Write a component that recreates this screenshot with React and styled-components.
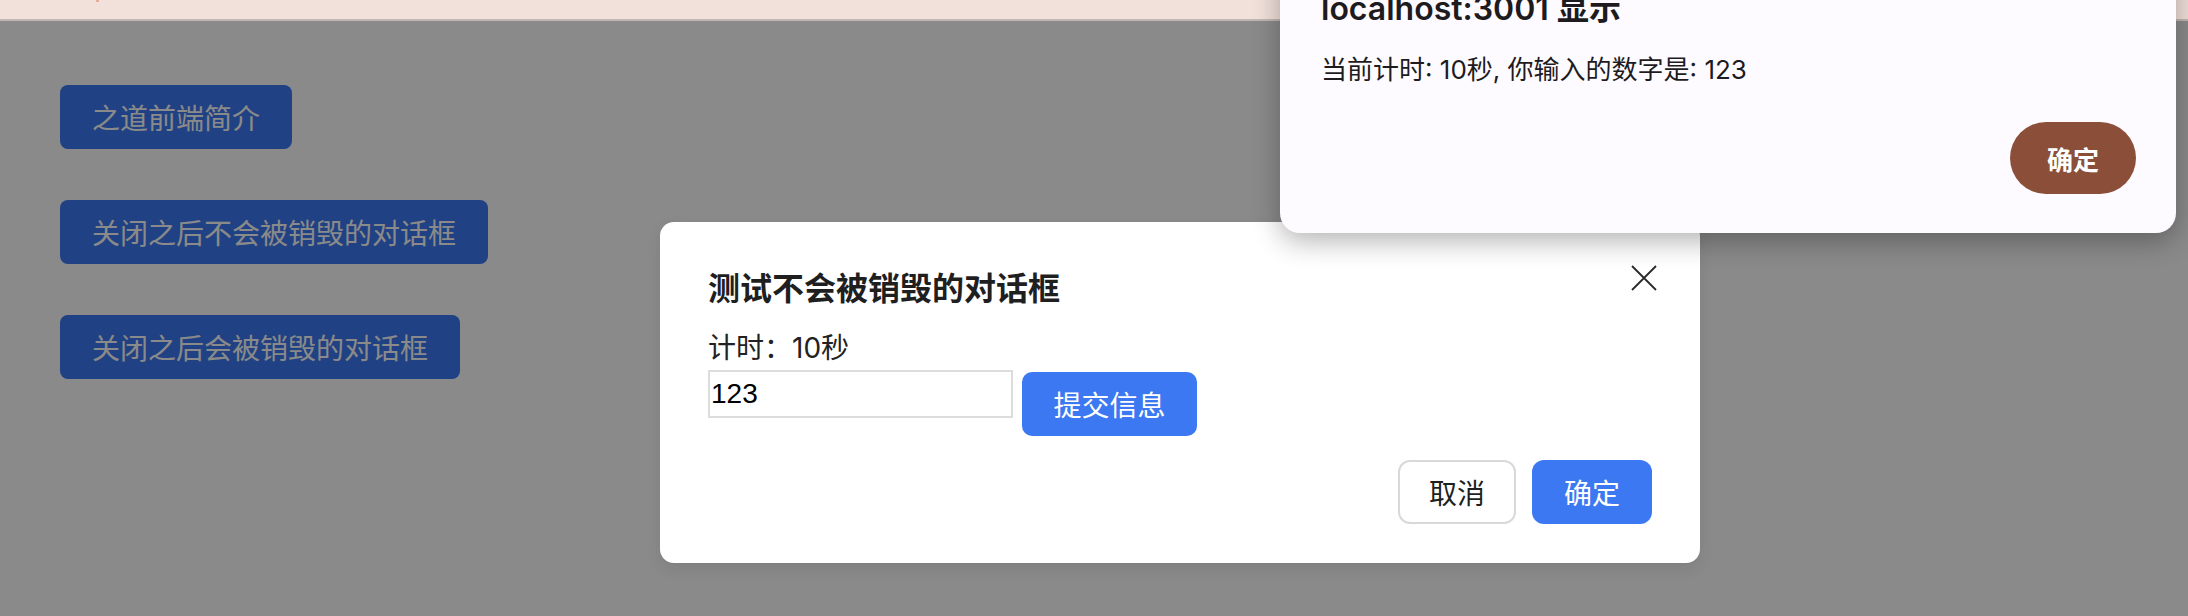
import React from "react";
import styled, { createGlobalStyle } from "styled-components";

const GlobalStyle = createGlobalStyle`
  html, body { margin: 0; padding: 0; }
  body {
    background: #fff;
    font-family: Inter, "Noto Sans CJK SC", sans-serif;
    overflow: hidden;
  }
  * { box-sizing: border-box; }
`;

const Page = styled.div`
  position: relative;
  width: 2188px;
  height: 616px;
  overflow: hidden;
  background: #fff;
`;

const TopBar = styled.div`
  position: relative;
  z-index: 3;
  height: 21px;
  background: #f2e0da;
  border-bottom: 2px solid #c1b6b2;
  display: flex;
  align-items: flex-start;
  padding-left: 96px;
`;

const Mark = styled.span`
  width: 3px;
  height: 2px;
  background: #e3a390;
  border-radius: 1px;
`;

const Content = styled.main`
  display: flex;
  flex-direction: column;
  align-items: flex-start;
  gap: 51px;
  padding: 64px 0 0 60px;
`;

const OpenButton = styled.button`
  height: 64px;
  padding: 0 32px;
  border: none;
  border-radius: 8px;
  background: #3b78f2;
  color: #fff;
  font-family: "Noto Sans CJK SC", sans-serif;
  font-size: 28px;
  line-height: 64px;
  cursor: pointer;
`;

const Overlay = styled.div`
  position: absolute;
  inset: 0;
  z-index: 1;
  background: rgba(0, 0, 0, 0.46);
`;

const Modal = styled.section`
  position: absolute;
  z-index: 2;
  left: 660px;
  top: 222px;
  width: 1040px;
  padding: 40px 48px 39px 48px;
  background: #fff;
  border-radius: 14px;
  box-shadow: 0 6px 16px rgba(0, 0, 0, 0.08);
  color: rgba(0, 0, 0, 0.88);
`;

const ModalTitle = styled.h2`
  margin: 0 0 16px;
  font-family: "Noto Sans CJK SC", sans-serif;
  font-size: 32px;
  font-weight: 600;
  line-height: 48px;
  color: #1f1f1f;
`;

const CloseButton = styled.button`
  position: absolute;
  top: 43px;
  right: 43px;
  width: 26px;
  height: 26px;
  padding: 0;
  border: none;
  background: none;
  cursor: pointer;
  display: flex;
`;

const Label = styled.div`
  font-size: 28px;
  line-height: 44px;
  color: #222;
`;

const InputRow = styled.div`
  display: flex;
  align-items: flex-start;
  gap: 9px;
`;

const NumberInput = styled.input`
  width: 305px;
  height: 48px;
  padding: 0 0 0 1px;
  border: 2px solid #dcdcdc;
  font-family: "Liberation Sans", Arial, sans-serif;
  font-size: 28px;
  color: #000;
  outline: none;
`;

const SubmitButton = styled.button`
  margin-top: 2px;
  width: 175px;
  height: 64px;
  padding: 0;
  border: none;
  border-radius: 10px;
  background: #3b78f2;
  color: #fff;
  font-family: "Noto Sans CJK SC", sans-serif;
  font-size: 28px;
  cursor: pointer;
`;

const Footer = styled.div`
  display: flex;
  justify-content: flex-end;
  gap: 16px;
  margin-top: 24px;
`;

const FooterButton = styled.button`
  height: 64px;
  padding: 0 ${(p) => (p.$primary ? "32px" : "29px")};
  border: ${(p) => (p.$primary ? "none" : "2px solid #d9d9d9")};
  border-radius: 12px;
  background: ${(p) => (p.$primary ? "#3b78f2" : "#fff")};
  color: ${(p) => (p.$primary ? "#fff" : "#1f1f1f")};
  font-family: "Noto Sans CJK SC", sans-serif;
  font-size: 28px;
  cursor: pointer;
`;

const Alert = styled.div`
  position: absolute;
  z-index: 4;
  left: 1280px;
  top: -51px;
  width: 896px;
  padding: 40px 40px 39px 41px;
  background: #fdfbff;
  border-radius: 20px;
  box-shadow: 0 8px 28px rgba(0, 0, 0, 0.3);
  color: #1d1b1e;
`;

const AlertTitle = styled.h1`
  margin: 0;
  font-family: Inter, "Noto Sans CJK SC", sans-serif;
  font-size: 32px;
  font-weight: 600;
  line-height: 40px;
`;

const AlertBody = styled.p`
  margin: 23px 0 0;
  font-family: Inter, "Noto Sans CJK SC", sans-serif;
  font-size: 26px;
  line-height: 36px;
`;

const AlertActions = styled.div`
  display: flex;
  justify-content: flex-end;
  margin-top: 34px;
`;

const AlertButton = styled.button`
  height: 72px;
  padding: 0 37px;
  border: none;
  border-radius: 36px;
  background: #8b4f39;
  color: #fff;
  font-family: "Noto Sans CJK SC", sans-serif;
  font-size: 26px;
  font-weight: 700;
  cursor: pointer;
`;

export default function App() {
  return (
    <>
      <GlobalStyle />
      <Page>
        <TopBar>
          <Mark />
        </TopBar>
        <Content>
          <OpenButton>之道前端简介</OpenButton>
          <OpenButton>关闭之后不会被销毁的对话框</OpenButton>
          <OpenButton>关闭之后会被销毁的对话框</OpenButton>
        </Content>
        <Overlay />
        <Modal>
          <ModalTitle>测试不会被销毁的对话框</ModalTitle>
          <CloseButton aria-label="关闭">
            <svg width="26" height="26" viewBox="0 0 26 26">
              <path d="M1 1 L25 25 M25 1 L1 25" stroke="#2a2a2a" strokeWidth="1.8" fill="none" />
            </svg>
          </CloseButton>
          <Label>计时：10秒</Label>
          <InputRow>
            <NumberInput defaultValue="123" />
            <SubmitButton>提交信息</SubmitButton>
          </InputRow>
          <Footer>
            <FooterButton>取消</FooterButton>
            <FooterButton $primary>确定</FooterButton>
          </Footer>
        </Modal>
        <Alert>
          <AlertTitle>localhost:3001 显示</AlertTitle>
          <AlertBody>当前计时: 10秒, 你输入的数字是: 123</AlertBody>
          <AlertActions>
            <AlertButton>确定</AlertButton>
          </AlertActions>
        </Alert>
      </Page>
    </>
  );
}
